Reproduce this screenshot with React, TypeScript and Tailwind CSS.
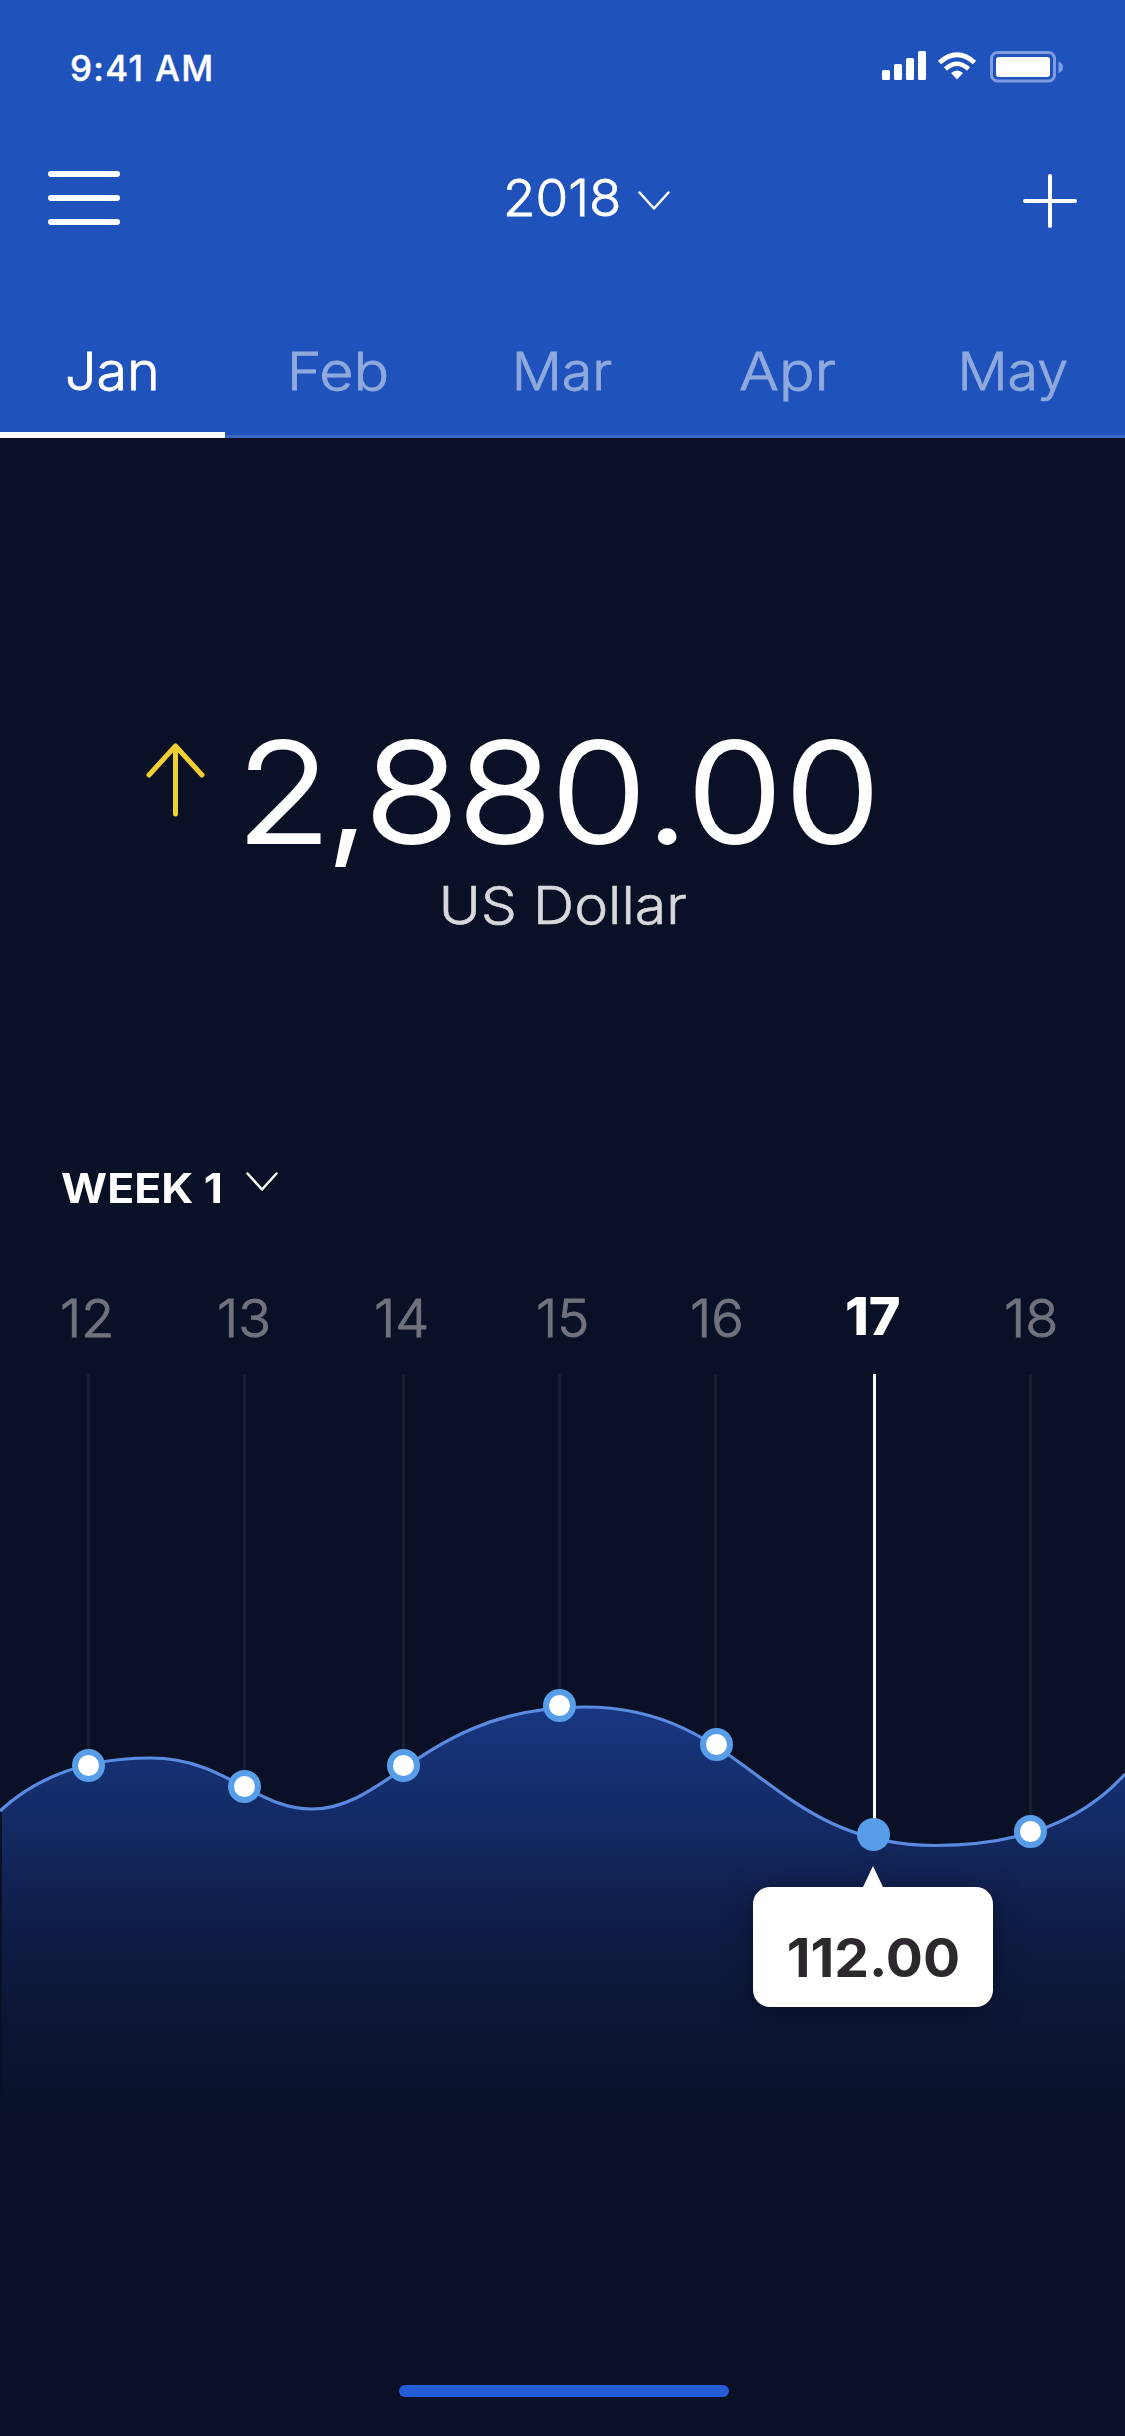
import * as React from "react";
import { clsx } from "clsx";

interface DayPoint {
  day: string;
  x: number;
  y: number;
  lineX: number;
}

const MONTHS = ["Jan", "Feb", "Mar", "Apr", "May"];

const POINTS: DayPoint[] = [
  { day: "12", x: 88.5, y: 391.5, lineX: 87 },
  { day: "13", x: 244.5, y: 412.5, lineX: 243 },
  { day: "14", x: 403.5, y: 391.5, lineX: 402 },
  { day: "15", x: 559.5, y: 331.5, lineX: 558 },
  { day: "16", x: 716.5, y: 370.5, lineX: 714 },
  { day: "17", x: 873.5, y: 460.5, lineX: 873 },
  { day: "18", x: 1030.5, y: 457.5, lineX: 1029 },
];

const CURVE =
  "C45 395 100 384 151 384C225 384 255 435 312 435C390 435 428 333 585 333C746 333 769 471.5 935 471.5C1005 471.5 1076 455 1125 400";

export default function App() {
  const [month, setMonth] = React.useState("Jan");
  const [day, setDay] = React.useState("17");

  return (
    <div className="flex h-[2436px] w-[1125px] flex-col overflow-hidden bg-[#0a1025] font-['Inter',sans-serif] text-white">
      <header className="flex h-[438px] flex-col bg-[#1f53bb]">
        <StatusBar />
        <div className="mt-[58px] flex h-[96px] items-center justify-between pr-12 pl-12">
          <button aria-label="Menu" className="flex w-[72px] flex-col gap-[18px]">
            <span className="h-1.5 rounded-full bg-white" />
            <span className="h-1.5 rounded-full bg-white" />
            <span className="h-1.5 rounded-full bg-white" />
          </button>
          <button className="ml-[30px] flex items-center gap-[24px]">
            <span className="origin-left scale-x-[1.06] text-[50px] leading-[60px] font-light [-webkit-text-stroke:0.8px]">
              2018
            </span>
            <Chevron className="mt-1.5" />
          </button>
          <button aria-label="Add">
            <svg width="54" height="54" viewBox="0 0 54 54" className="mt-1.5 block">
              <path d="M27 2v50M2 27h50" stroke="#fff" strokeWidth="4" strokeLinecap="round" />
            </svg>
          </button>
        </div>
        <nav className="mt-auto grid h-[132px] grid-cols-5">
          {MONTHS.map((m) => (
            <button
              key={m}
              onClick={() => setMonth(m)}
              className={clsx(
                "flex justify-center pt-[34px] text-[52px] leading-[64px] font-light [-webkit-text-stroke:0.8px]",
                m === month
                  ? "border-b-6 border-white text-white"
                  : "border-b-3 border-[#3b66c1] text-[#8fa9dd]"
              )}
            >
              <span className={m === "Feb" || m === "Apr" ? "scale-x-[1.14]" : "scale-x-[1.07]"}>{m}</span>
            </button>
          ))}
        </nav>
      </header>

      <section className="flex h-[672px] flex-col items-center pt-[276px]">
        <div className="flex h-[152px] w-full pl-[146px]">
          <svg width="59" height="76" viewBox="0 0 59 76" fill="none" className="mt-[27px]">
            <path
              d="M29.5 5v68M3 34 29.500 5 56 34"
              stroke="#f1cf33"
              strokeWidth="5"
              strokeLinecap="round"
              strokeLinejoin="round"
            />
          </svg>
          <span className="mt-0.5 ml-[31px] origin-left scale-x-[1.11] text-[140px] leading-[152px] font-light whitespace-nowrap [-webkit-text-stroke:2px]">
            <span className="tracking-[-5px]">2,</span>
            <span className="tracking-[-1.5px]">880</span>
            <span className="tracking-[1.5px]">.00</span>
          </span>
        </div>
        <p className="mt-[8px] scale-x-[1.1] text-[52px] leading-[64px] font-light text-[#d8d9dc] [-webkit-text-stroke:0.6px]">
          US Dollar
        </p>
      </section>

      <section className="flex flex-col">
        <button className="mt-[54px] ml-[61px] flex h-12 items-center gap-[36px] self-start">
          <span className="origin-left scale-x-[1.085] text-[41px] leading-12 font-bold">WEEK 1</span>
          <Chevron className="-mt-3" />
        </button>
        <div className="mt-[75px] grid h-[87px] grid-cols-7 pr-[15px] pl-[8px]">
          {POINTS.map((p) => (
            <button
              key={p.day}
              onClick={() => setDay(p.day)}
              className={clsx(
                "flex justify-center text-[52px] leading-[64px]",
                p.day === "15" && "pl-[7px]",
                p.day === day
                  ? "-mt-[2px] pr-[3px] font-extrabold text-white"
                  : "font-light text-[#70727e] [-webkit-text-stroke:1px]"
              )}
            >
              <span className="scale-x-[1.04]">{p.day}</span>
            </button>
          ))}
        </div>
        <div className="relative">
          <Chart active={day} />
          <div className="absolute top-[492px] left-[753px] flex w-[240px] flex-col items-center drop-shadow-[0_6px_14px_rgba(5,8,25,0.6)]">
            <svg width="20" height="21" viewBox="0 0 20 21" className="block">
              <path d="M10 0 20 21H0z" fill="#fff" />
            </svg>
            <div className="flex h-[120px] w-full justify-center rounded-[17px] bg-white pt-[39px] text-[53px] leading-[64px] font-bold text-[#2d282e]">
              <span className="scale-x-[1.04]">112.00</span>
            </div>
          </div>
        </div>
      </section>

      <div className="mt-auto mb-[39px] ml-[399px] h-3 w-[330px] rounded-full bg-[#245cd8]" />
    </div>
  );
}

function StatusBar() {
  return (
    <div className="flex h-[92px] items-end justify-between pr-[61px] pl-[70px]">
      <span className="mb-0.5 text-[35px] leading-[44px] font-medium tracking-[1.3px] [-webkit-text-stroke:0.4px]">
        9:41 AM
      </span>
      <svg width="182" height="32" viewBox="0 0 182 32" className="mb-[9px]">
        <g fill="#fff">
          <rect x="0" y="19" width="8" height="10" rx="1.500" />
          <rect x="12" y="13" width="8" height="16" rx="1.500" />
          <rect x="24" y="7" width="8" height="22" rx="1.500" />
          <rect x="36" y="0" width="8" height="29" rx="1.500" />
          <path d="M75 28.500 69 22Q75 17 81 22Z" />
          <rect x="114" y="6" width="54" height="20" rx="3" />
        </g>
        <g fill="none" stroke="#fff" strokeWidth="5">
          <path d="M57.500 11.500Q75-4 92.500 11.500" />
          <path d="M63.500 18Q75 7.500 86.500 18" strokeWidth="4.500" />
        </g>
        <rect x="109.500" y="1.500" width="63" height="28.500" rx="6" fill="none" stroke="#7f9ce0" strokeWidth="3" />
        <path d="M176.500 10.500Q181 12 181 16.200T176.500 22z" fill="#7f9ce0" />
      </svg>
    </div>
  );
}

function Chevron({ className }: { className?: string }) {
  return (
    <svg width="32" height="20" viewBox="0 0 32 20" fill="none" className={className}>
      <path
        d="M1.500 1.500 16 17.500 30.500 1.500"
        stroke="#fff"
        strokeWidth="2.500"
        strokeLinecap="round"
        strokeLinejoin="round"
      />
    </svg>
  );
}

function Chart({ active }: { active: string }) {
  return (
    <svg width="1125" height="860" viewBox="0 0 1125 860" fill="none" className="block">
      <defs>
        <linearGradient id="area" gradientUnits="userSpaceOnUse" x1="0" y1="330" x2="0" y2="830">
          <stop offset="0" stopColor="#183883" />
          <stop offset="0.22" stopColor="#132b66" />
          <stop offset="0.4" stopColor="#10204d" />
          <stop offset="0.6" stopColor="#0c1737" />
          <stop offset="0.8" stopColor="#0a112a" />
          <stop offset="1" stopColor="#0a1025" />
        </linearGradient>
      </defs>
      {POINTS.map((p) => (
        <rect
          key={p.day}
          x={p.lineX}
          y="0"
          width="3"
          height={p.y}
          fill={p.day === active ? "#fff" : "#191d31"}
        />
      ))}
      <path d={`M2 435${CURVE}V860H2z`} fill="url(#area)" />
      <path d={`M0 437${CURVE}`} stroke="#5a8be0" strokeWidth="3.200" />
      {POINTS.map((p) =>
        p.day === active ? (
          <circle key={p.day} cx={p.x} cy={p.y} r="16.500" fill="#589de8" />
        ) : (
          <circle key={p.day} cx={p.x} cy={p.y} r="13.500" fill="#fff" stroke="#589de8" strokeWidth="6" />
        )
      )}
    </svg>
  );
}
